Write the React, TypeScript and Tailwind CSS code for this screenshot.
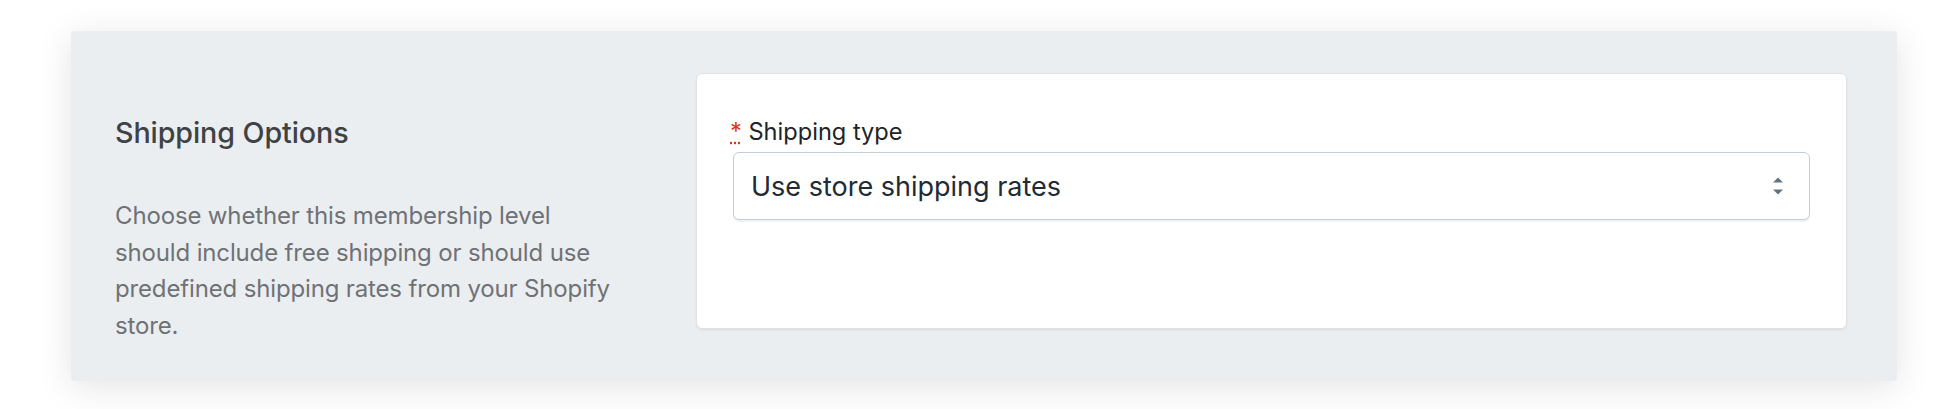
import { useState } from 'react';

function SelectArrows() {
  return (
    <svg width="12" height="20" viewBox="0 0 12 20" className="pointer-events-none absolute right-[26px] top-1/2 -translate-y-1/2" aria-hidden="true">
      <path d="M1 6.5 L6 1.5 L11 6.5 Z" fill="#637381" />
      <path d="M1 13.5 L6 18.5 L11 13.5 Z" fill="#637381" />
    </svg>
  );
}

export default function App() {
  const [shippingType, setShippingType] = useState('store');

  return (
    <div className="min-h-screen bg-white pt-[31px] font-['Inter',sans-serif]">
      <div className="ml-[71px] flex w-[1826px] items-start rounded-[4px] bg-[#ebeef1] pb-[36px] pl-[44px] pr-[50px] pt-[42px] shadow-[0_6px_36px_rgba(0,0,0,0.11)]">
        {/* * 설명 영역 */}
        <div className="mr-[41px] w-[540px] shrink-0">
          <h2 className="mt-[42px] text-[28.7px] font-medium leading-[36px] tracking-[-0.1px] text-[#3f4245]">
            Shipping Options
          </h2>
          <p className="mt-[47px] max-w-[515px] text-[24px] leading-[36.7px] tracking-[-0.15px] text-[#6f7275]">
            Choose whether this membership level should include free shipping or should use predefined shipping rates
            from your Shopify store.
          </p>
        </div>

        {/* * 배송 유형 선택 */}
        <div className="h-[256px] flex-1 rounded-[6px] border border-[#dfe3e8] bg-white px-[36px] pt-[42px] shadow-[0_1px_2px_rgba(22,29,37,0.08)]">
          <label htmlFor="shippingType" className="-ml-[3px] block text-[23.6px] leading-[32px] text-[#212326]">
            <abbr title="required" className="text-[#de3618]">
              *
            </abbr>{' '}
            Shipping type
          </label>
          <div className="relative mt-[4px]">
            <select
              id="shippingType"
              value={shippingType}
              onChange={(e) => setShippingType(e.target.value)}
              className="h-[68px] w-full appearance-none rounded-[6px] border border-[#c4cdd5] bg-white pl-[17px] pr-[60px] pt-[3px] text-[27px] text-[#212b36] shadow-[0_2px_0_rgba(22,29,37,0.06)] focus:outline-none"
            >
              <option value="store">Use store shipping rates</option>
              <option value="free">Free shipping</option>
            </select>
            <SelectArrows />
          </div>
        </div>
      </div>
    </div>
  );
}
